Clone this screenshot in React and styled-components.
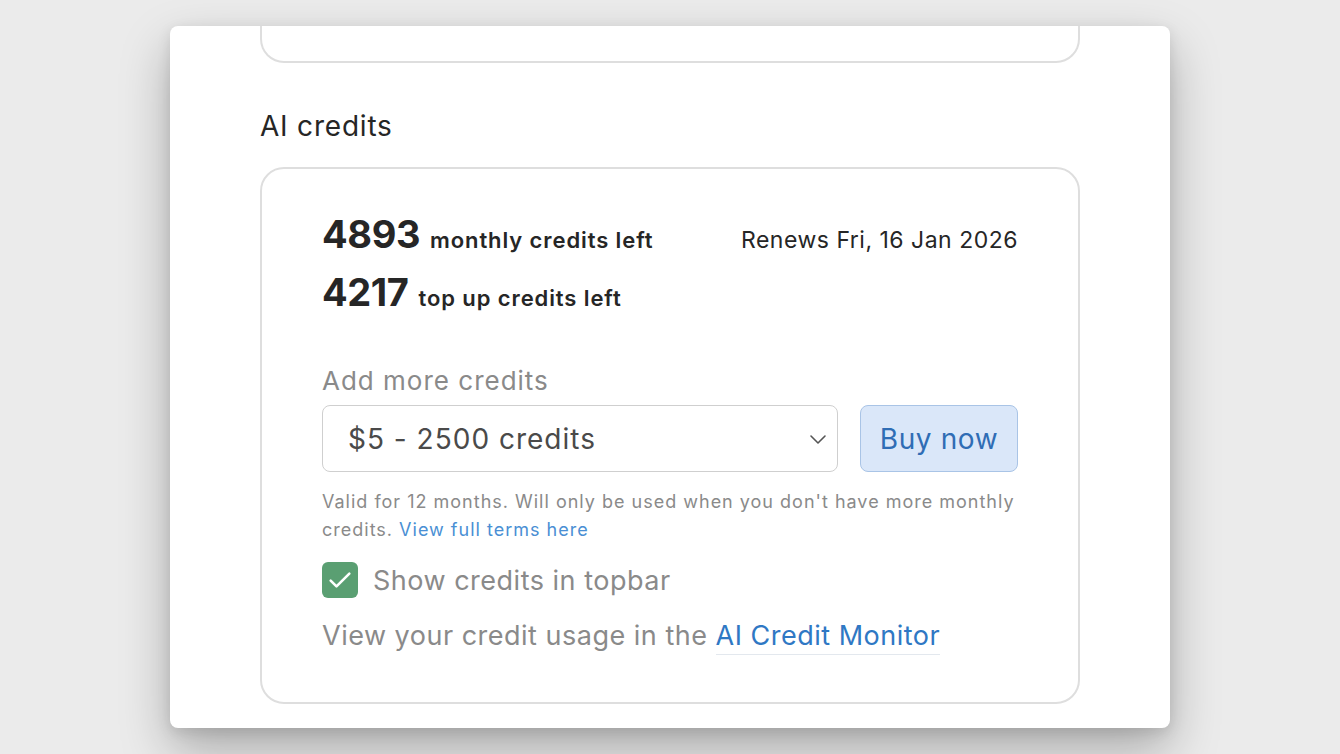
import { useState } from 'react';
import styled, { createGlobalStyle } from "styled-components";

const GlobalStyle = createGlobalStyle`
    html, body {
        margin: 0;
        padding: 0;
        background: #ebebeb;
        font-family: Inter, "Noto Sans", sans-serif;
        overflow: hidden;
    }
`

const Page = styled.div`
    height: 754px;
    display: flex;
    justify-content: center;
    padding-top: 26px;
    box-sizing: border-box;
`

const Modal = styled.div`
    width: 1000px;
    height: 702px;
    background: #fff;
    border-radius: 8px;
    box-shadow: 0 22px 50px rgba(0, 0, 0, 0.28), 0 4px 14px rgba(0, 0, 0, 0.1);
    overflow: hidden;
    display: flex;
    flex-direction: column;
    align-items: center;
`

const Column = styled.div`
    width: 820px;
    display: flex;
    flex-direction: column;
`

// bottom of the previous settings card, scrolled mostly out of view
const CardTail = styled.div`
    height: 37px;
    box-sizing: border-box;
    border: 2px solid #dedede;
    border-top: none;
    border-radius: 0 0 24px 24px;
`

const SectionTitle = styled.h2`
    margin: 46px 0 0;
    font-size: 28px;
    font-weight: 400;
    line-height: 34px;
    letter-spacing: 0.8px;
    color: #262626;
`

const Card = styled.div`
    margin-top: 24px;
    border: 2px solid #dedede;
    border-radius: 24px;
    padding: 42px 60px 46px;
    display: flex;
    flex-direction: column;
`

const Summary = styled.div`
    display: flex;
    justify-content: space-between;
    align-items: baseline;
`

const Balances = styled.div`
    display: flex;
    flex-direction: column;
    gap: 12px;
`

const Balance = styled.div`
    display: flex;
    align-items: baseline;
    gap: 10px;
    color: #262626;
    height: 46px;
`

const Amount = styled.span`
    font-size: 38px;
    font-weight: 700;
    letter-spacing: -0.4px;
    line-height: 46px;
`

const AmountLabel = styled.span`
    font-size: 22px;
    font-weight: 600;
    letter-spacing: 0.9px;
`

const Renews = styled.div`
    font-size: 23px;
    color: #262626;
    letter-spacing: 0.5px;
`

const FieldLabel = styled.div`
    margin-top: 50px;
    font-size: 26px;
    color: #8a8a8a;
    line-height: 32px;
    letter-spacing: 1px;
`

const BuyRow = styled.div`
    margin-top: 8px;
    display: flex;
    gap: 22px;
`

const SelectBox = styled.label`
    position: relative;
    flex: 1;
    height: 67px;
    display: flex;
    align-items: center;
`

const Select = styled.select`
    appearance: none;
    width: 100%;
    height: 100%;
    box-sizing: border-box;
    border: 1px solid #cfcfcf;
    border-radius: 8px;
    background: #fff;
    padding: 0 50px 0 25px;
    font-family: inherit;
    font-size: 28px;
    letter-spacing: 1px;
    color: #4a4a4a;
    outline: none;
`

const Chevron = styled.svg`
    position: absolute;
    right: 8px;
    pointer-events: none;
`

const BuyButton = styled.button`
    width: 158px;
    height: 67px;
    border: 1px solid #a9c4e6;
    border-radius: 8px;
    background: #dae7f9;
    color: #2f6db5;
    font-family: inherit;
    font-size: 28px;
    letter-spacing: 0.6px;
    cursor: pointer;
`

const Note = styled.p`
    margin: 16px 0 0;
    font-size: 18px;
    line-height: 28px;
    letter-spacing: 1px;
    color: #8a8a8a;
`

const NoteLink = styled.a`
    color: #4a8fd4;
    text-decoration: none;
`

const CheckRow = styled.label`
    margin-top: 18px;
    display: flex;
    align-items: center;
    gap: 15px;
    font-size: 27px;
    letter-spacing: 0.5px;
    color: #8a8a8a;
    cursor: pointer;
`

const Box = styled.span`
    width: 36px;
    height: 36px;
    border-radius: 6px;
    background: ${p => (p.$on ? "#5a9f72" : "#fff")};
    border: ${p => (p.$on ? "none" : "1px solid #cfcfcf")};
    display: flex;
    align-items: center;
    justify-content: center;
`

const Usage = styled.p`
    margin: 18px 0 0;
    font-size: 27px;
    line-height: 40px;
    letter-spacing: 0.5px;
    color: #8a8a8a;
`

const MonitorLink = styled.a`
    color: #2f78c4;
    text-decoration: none;
    border-bottom: 1px solid #e3e8ee;
    padding-bottom: 2px;
`

export default function App() {
    const [pack, setPack] = useState("5");
    const [showInTopbar, setShowInTopbar] = useState(true);

    return (
        <>
            <GlobalStyle />
            <Page>
                <Modal>
                    <Column>
                        <CardTail />
                        <SectionTitle>AI credits</SectionTitle>
                        <Card>
                            <Summary>
                                <Balances>
                                    <Balance>
                                        <Amount>4893</Amount>
                                        <AmountLabel>monthly credits left</AmountLabel>
                                    </Balance>
                                    <Balance>
                                        <Amount>4217</Amount>
                                        <AmountLabel>top up credits left</AmountLabel>
                                    </Balance>
                                </Balances>
                                <Renews>Renews Fri, 16 Jan 2026</Renews>
                            </Summary>

                            <FieldLabel>Add more credits</FieldLabel>
                            <BuyRow>
                                <SelectBox>
                                    <Select value={pack} onChange={e => setPack(e.target.value)}>
                                        <option value="5">$5 - 2500 credits</option>
                                        <option value="10">$10 - 5000 credits</option>
                                        <option value="20">$20 - 10000 credits</option>
                                    </Select>
                                    <Chevron width="24" height="24" viewBox="0 0 24 24" fill="none">
                                        <path d="M5 9l7 7 7-7" stroke="#555" strokeWidth="1.6" strokeLinecap="round" strokeLinejoin="round" />
                                    </Chevron>
                                </SelectBox>
                                <BuyButton type="button">Buy now</BuyButton>
                            </BuyRow>
                            <Note>
                                Valid for 12 months. Will only be used when you don't have more monthly
                                credits. <NoteLink href="#">View full terms here</NoteLink>
                            </Note>

                            <CheckRow onClick={() => setShowInTopbar(v => !v)}>
                                <Box $on={showInTopbar}>
                                    {showInTopbar && (
                                        <svg width="28" height="28" viewBox="0 0 24 24" fill="none">
                                            <path d="M4 12.5l5 5L20 6.5" stroke="#fff" strokeWidth="2.2" strokeLinecap="round" strokeLinejoin="round" />
                                        </svg>
                                    )}
                                </Box>
                                Show credits in topbar
                            </CheckRow>

                            <Usage>
                                View your credit usage in the <MonitorLink href="#">AI Credit Monitor</MonitorLink>
                            </Usage>
                        </Card>
                    </Column>
                </Modal>
            </Page>
        </>
    );
}
